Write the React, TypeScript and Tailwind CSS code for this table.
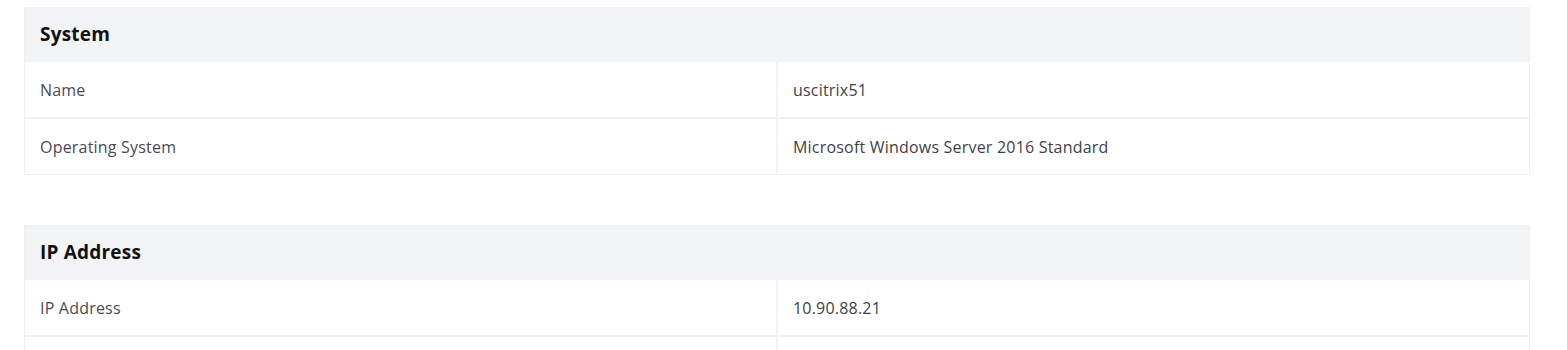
import React from 'react';

type Row = { label: string; value: string };

const Section: React.FC<{ title: string; rows: Row[] }> = ({ title, rows }) => {
  return (
    <div className="w-[1506px] border-x border-b border-[#efefef] bg-white">
      <div className="h-[55px] flex items-center px-[15px] bg-[#f2f3f5]">
        <h2 className="text-[19px] font-bold tracking-[0.2px] text-[#111]">{title}</h2>
      </div>
      {rows.map((r, i) => (
        <div key={i} className="grid grid-cols-[753px_1fr] border-b-2 border-[#f2f2f2] last:border-b-0">
          <div className="h-[55px] flex items-center px-[15px] text-[16px] tracking-[0.2px] text-[#4a4a55] border-r-2 border-[#f2f2f2]">
            {r.label}
          </div>
          <div className="h-[55px] flex items-center px-[15px] text-[16px] tracking-[0.2px] text-[#3f3f48]">
            {r.value}
          </div>
        </div>
      ))}
    </div>
  );
};

const App: React.FC = () => {
  return (
    <div className="bg-white h-[350px] overflow-hidden pt-[7px] pl-[24px] font-['Open_Sans',sans-serif]">
      <Section
        title="System"
        rows={[
          { label: 'Name', value: 'uscitrix51' },
          { label: 'Operating System', value: 'Microsoft Windows Server 2016 Standard' },
        ]}
      />
      <div className="h-[50px]" />
      <Section
        title="IP Address"
        rows={[
          { label: 'IP Address', value: '10.90.88.21' },
          { label: '', value: '' },
        ]}
      />
    </div>
  );
};

export default App;
